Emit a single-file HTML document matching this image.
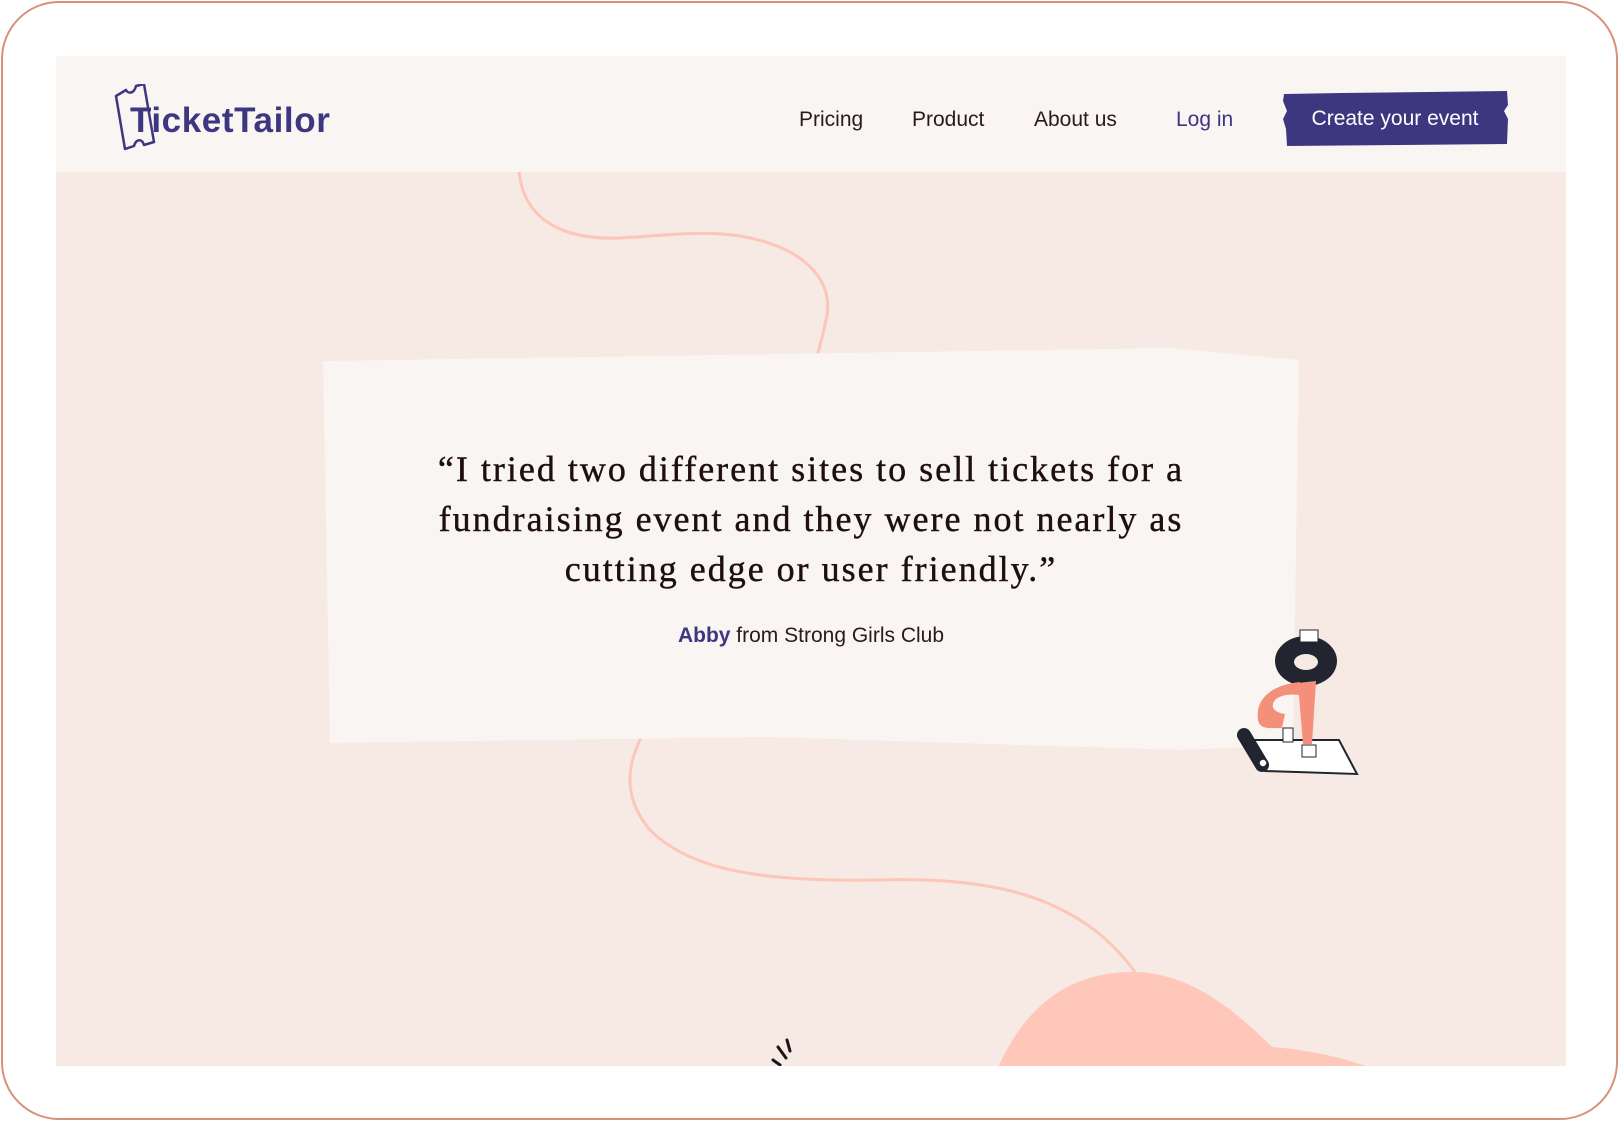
<!DOCTYPE html>
<html><head><meta charset="utf-8"><style>
html,body{margin:0;padding:0;background:#fff;width:1622px;height:1124px;overflow:hidden;position:relative;font-family:"Liberation Sans",sans-serif}
.frame{position:absolute;left:1px;top:1px;width:1617px;height:1119px;border:2px solid #d9907a;border-radius:58px;box-sizing:border-box}
.page{position:absolute;left:56px;top:56px;width:1510px;height:1010px;background:#f7e9e4;overflow:hidden}
.hdr{position:absolute;left:0;top:0;width:1510px;height:116px;background:#f9f5f2}
.nav{position:absolute;top:52px;font-size:21px;color:#2a1a1a}
.btn{position:absolute;left:1227px;top:36px;width:224px;height:54px;color:#fff;font-size:21px;text-align:center;line-height:54px}
.quote{position:absolute;left:0;width:1510px;text-align:center;font-family:"Liberation Serif",serif;font-size:36px;letter-spacing:2px;color:#1e0f0f;-webkit-text-stroke:0.4px #1e0f0f}
.attr{position:absolute;left:0;width:1510px;top:568px;text-align:center;font-size:21px;color:#2a1a1a}
</style></head><body>
<div class="frame"></div>
<div class="page">
<svg width="1510" height="1010" style="position:absolute;left:0;top:0">
 <g transform="translate(-56,-56)" fill="none" stroke="#fcc6b8" stroke-width="3">
  <path d="M519 172 C525 225 570 240 621 238 C660 236 700 230 740 236 C810 248 835 285 826 320 C823 335 820 345 817 357"/>
  <path d="M641 738 C625 770 625 800 650 830 C690 870 760 882 879 880 C950 878 1000 885 1040 900 C1090 920 1115 945 1135 972"/>
 </g>
 <g transform="translate(-56,-56)">
  <path d="M998 1068 C1030 995 1080 972 1133 972 C1185 972 1230 1005 1272 1047 C1310 1050 1345 1058 1371 1068 Z" fill="#fec7b9"/>
  <polygon points="323,361 1169,348 1299,360 1293,745 1179,750 765,737 330,743" fill="#f9f5f2"/>
  <g stroke="#1a1414" stroke-width="3" stroke-linecap="round">
   <line x1="773" y1="1060" x2="780" y2="1065"/><line x1="778" y1="1047" x2="786" y2="1058"/><line x1="787" y1="1040" x2="790" y2="1051"/>
  </g>
  <g>
   <path d="M1253 740 L1339 740 L1357 774 L1265 771 Z" fill="#fff" stroke="#22242f" stroke-width="2"/>
   <path d="M1244 735 L1262 765" stroke="#22242f" stroke-width="14" stroke-linecap="round"/>
   <circle cx="1263" cy="763" r="4" fill="#fff" stroke="#22242f" stroke-width="1.5"/>
   <ellipse cx="1306" cy="661" rx="31" ry="25" fill="#22242f"/>
   <ellipse cx="1306" cy="662" rx="12" ry="8" fill="#f7e9e4"/>
   <rect x="1300" y="630" width="18" height="12" fill="#fff" stroke="#22242f" stroke-width="1"/>
   <path d="M1300 682 C1270 685 1255 700 1258 720 C1260 730 1270 728 1282 728 L1285 714 C1272 712 1270 705 1276 699 C1285 693 1295 695 1300 695 Z" fill="#f49079"/>
   <path d="M1298 683 L1316 681 L1312 744 L1303 744 Z" fill="#f49079"/>
   <rect x="1283" y="728" width="10" height="14" fill="#fff" stroke="#22242f" stroke-width="1"/>
   <rect x="1302" y="745" width="14" height="12" fill="#fff" stroke="#22242f" stroke-width="1"/>
  </g>
 </g>
</svg>
<div class="hdr">
 <svg width="240" height="80" style="position:absolute;left:58px;top:28px">
  <path d="M2 12 L12 6 C14 10 20 10 22 2 L30 0 L40 58 L30 61 C28 54 22 55 20 62 L11 65 Z" fill="none" stroke="#3d3780" stroke-width="2.5" stroke-linejoin="round"/>
  <text x="16" y="48" font-family="Liberation Sans,sans-serif" font-size="35" font-weight="bold" fill="#3d3780" letter-spacing="0.6">TicketTailor</text>
 </svg>
 <div class="nav" style="left:743px">Pricing</div>
 <div class="nav" style="left:856px">Product</div>
 <div class="nav" style="left:978px">About us</div>
 <div class="nav" style="left:1120px;color:#3d3780">Log in</div>
 <svg width="230" height="60" style="position:absolute;left:1225px;top:33px">
  <path d="M3 5 L60 4 L226 2 L227 16 L223 22 L227 30 L226 55 L120 56 L6 57 L5 40 L2 30 L6 22 L2 12 Z" fill="#3d3780"/>
 </svg>
 <div class="btn">Create your event</div>
</div>
<div class="quote" style="top:392px">“I tried two different sites to sell tickets for a</div>
<div class="quote" style="top:442px">fundraising event and they were not nearly as</div>
<div class="quote" style="top:492px">cutting edge or user friendly.”</div>
<div class="attr"><b style="color:#3d3780">Abby</b> from Strong Girls Club</div>
</div>
</body></html>
